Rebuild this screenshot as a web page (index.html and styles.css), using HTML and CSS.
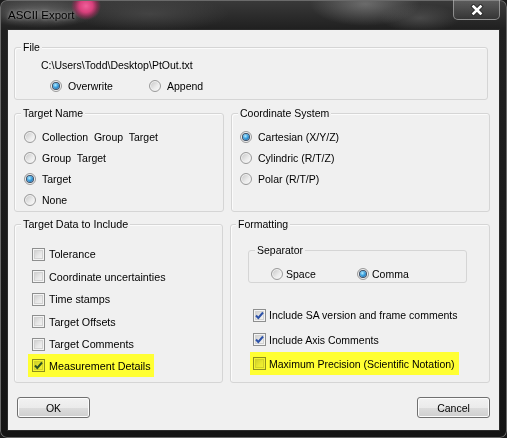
FILE: index.html
```html
<!DOCTYPE html>
<html lang="en">
<head>
    <meta charset="UTF-8">
    <title>ASCII Export</title>
    <link rel="stylesheet" href="styles.css">
</head>
<body>
    <div class="window">
        <div class="titlebar">
            <span class="title">ASCII Export</span>
            <button class="close" title="Close">
                <svg width="14" height="12" viewBox="0 0 14 12">
                    <path d="M3.5 2.5 L10.5 9.5 M10.5 2.5 L3.5 9.5" stroke="#2a2a2a" stroke-width="4.4" stroke-linecap="square"/>
                    <path d="M3.5 2.5 L10.5 9.5 M10.5 2.5 L3.5 9.5" stroke="#fff" stroke-width="2.6" stroke-linecap="square"/>
                </svg>
            </button>
        </div>

        <div class="client">
            <div class="group file">
                <span class="caption">File</span>
                <div class="path">C:\Users\Todd\Desktop\PtOut.txt</div>
                <div class="options">
                    <label class="opt"><span class="radio checked"></span>Overwrite</label>
                    <label class="opt"><span class="radio"></span>Append</label>
                </div>
            </div>

            <div class="row row-mid">
                <div class="group target-name">
                    <span class="caption">Target Name</span>
                    <div class="stack">
                        <label class="opt"><span class="radio"></span>Collection&nbsp; Group&nbsp; Target</label>
                        <label class="opt"><span class="radio"></span>Group&nbsp; Target</label>
                        <label class="opt"><span class="radio checked"></span>Target</label>
                        <label class="opt"><span class="radio"></span>None</label>
                    </div>
                </div>
                <div class="group coords">
                    <span class="caption">Coordinate System</span>
                    <div class="stack">
                        <label class="opt"><span class="radio checked"></span>Cartesian (X/Y/Z)</label>
                        <label class="opt"><span class="radio"></span>Cylindric (R/T/Z)</label>
                        <label class="opt"><span class="radio"></span>Polar (R/T/P)</label>
                    </div>
                </div>
            </div>

            <div class="row row-low">
                <div class="group target-data">
                    <span class="caption">Target Data to Include</span>
                    <div class="stack">
                        <label class="opt"><span class="check"></span>Tolerance</label>
                        <label class="opt"><span class="check"></span>Coordinate uncertainties</label>
                        <label class="opt"><span class="check"></span>Time stamps</label>
                        <label class="opt"><span class="check"></span>Target Offsets</label>
                        <label class="opt"><span class="check"></span>Target Comments</label>
                        <label class="opt hl">
                            <span class="check">
                                <svg width="11" height="11" viewBox="0 0 11 11"><path d="M2 5.5 L4.3 8 L9 2.5" fill="none" stroke="#2d52a8" stroke-width="2"/></svg>
                            </span>Measurement Details
                        </label>
                    </div>
                </div>
                <div class="group formatting">
                    <span class="caption">Formatting</span>
                    <div class="group separator">
                        <span class="caption">Separator</span>
                        <div class="options">
                            <label class="opt"><span class="radio"></span>Space</label>
                            <label class="opt"><span class="radio checked"></span>Comma</label>
                        </div>
                    </div>
                    <div class="stack">
                        <label class="opt">
                            <span class="check">
                                <svg width="11" height="11" viewBox="0 0 11 11"><path d="M2 5.5 L4.3 8 L9 2.5" fill="none" stroke="#2d52a8" stroke-width="2"/></svg>
                            </span>Include SA version and frame comments
                        </label>
                        <label class="opt">
                            <span class="check">
                                <svg width="11" height="11" viewBox="0 0 11 11"><path d="M2 5.5 L4.3 8 L9 2.5" fill="none" stroke="#2d52a8" stroke-width="2"/></svg>
                            </span>Include Axis Comments
                        </label>
                        <label class="opt hl"><span class="check"></span>Maximum Precision (Scientific Notation)</label>
                    </div>
                </div>
            </div>

            <div class="buttons">
                <button class="btn">OK</button>
                <button class="btn">Cancel</button>
            </div>
        </div>
    </div>
</body>
</html>
```

FILE: styles.css
```css
* {
    margin: 0;
    padding: 0;
    box-sizing: border-box;
}

body {
    font-family: 'Liberation Sans', Arial, sans-serif;
    font-size: 10.5px;
    color: #000;
    background-color: #1a1a1a;
}

.window {
    width: 507px;
    height: 438px;
    display: flex;
    flex-direction: column;
    border-radius: 7px;
    box-shadow: inset 0 0 0 1px #6a6a6a;
    background:
        radial-gradient(ellipse 15px 14px at 86px 6px, #f0609a 0, #d8407c 45%, rgba(190, 40, 100, 0.5) 75%, transparent 100%),
        radial-gradient(ellipse 55px 22px at 365px 4px, rgba(150, 150, 150, 0.55), transparent),
        radial-gradient(ellipse 40px 14px at 420px 18px, rgba(110, 110, 110, 0.45), transparent),
        radial-gradient(ellipse 80px 18px at 150px 14px, rgba(85, 85, 85, 0.55), transparent),
        radial-gradient(ellipse 60px 16px at 40px 12px, rgba(130, 130, 130, 0.6), transparent),
        linear-gradient(#3a3a3a, #202020 29px, #141414);
}

.titlebar {
    height: 29px;
    display: flex;
    justify-content: space-between;
    align-items: flex-start;
    padding: 0 7px 0 8px;
}

.title {
    margin-top: 8px;
    font-size: 11.5px;
    line-height: 14px;
    color: #000;
    text-shadow: 0 0 7px rgba(255, 255, 255, 0.6), 0 0 3px rgba(255, 255, 255, 0.45);
}

.close {
    width: 47px;
    height: 20px;
    border: 1px solid rgba(190, 190, 190, 0.6);
    border-top: none;
    border-radius: 0 0 5px 5px;
    background: linear-gradient(rgba(255, 255, 255, 0.18), rgba(255, 255, 255, 0.06));
    display: flex;
    align-items: center;
    justify-content: center;
}

.client {
    height: 402px;
    margin: 0 7px;
    border: 1px solid #2b2b2b;
    background-color: #f0f0f0;
    padding: 17px 9px 0 6px;
}

.group {
    border: 1px solid #d5d5d5;
    border-radius: 3px;
    box-shadow: inset 1px 1px 0 #fbfbfb;
}

.caption {
    display: block;
    width: fit-content;
    margin: -7px 0 0 6px;
    padding: 0 2px;
    line-height: 13px;
    background-color: #f0f0f0;
}

.opt {
    display: flex;
    align-items: center;
    gap: 6px;
    line-height: 14px;
    white-space: nowrap;
}

.options {
    display: flex;
    height: 14px;
}

.stack {
    display: flex;
    flex-direction: column;
}

/* radio buttons */
.radio {
    position: relative;
    flex: none;
    width: 12px;
    height: 12px;
    border-radius: 50%;
    border: 1px solid #9a9a9a;
    background: linear-gradient(135deg, #c4c4c4, #ececec 60%, #fafafa);
    box-shadow: inset 0 0 0 1px #f2f2f2;
}

.radio.checked::after {
    content: '';
    position: absolute;
    left: 2px;
    top: 2px;
    width: 6px;
    height: 6px;
    border-radius: 50%;
    background: radial-gradient(circle at 40% 35%, #b8ecff 0, #3ea3e0 45%, #0c4f94 100%);
    box-shadow: 0 0 0 1px #3c4f66;
}

/* check boxes */
.check {
    flex: none;
    width: 13px;
    height: 13px;
    border: 1px solid #8e8f8f;
    background: linear-gradient(135deg, #c6c6c6, #e8e8e8 55%, #f6f6f6);
    box-shadow: inset 0 0 0 1px #f4f4f4, inset 0 0 0 2px #d2d2d2;
}

.check svg {
    display: block;
}

.hl {
    align-self: flex-start;
    background-color: #ffff33;
}

.hl .check {
    mix-blend-mode: multiply;
}

/* file box */
.file {
    width: 474px;
    height: 53px;
}

.path {
    margin: 5px 0 0 26px;
    line-height: 13px;
}

.file .options {
    margin: 7px 0 0 35px;
}

.file .opt:first-child {
    width: 99px;
}

/* rows of boxes */
.row {
    display: flex;
    gap: 7px;
}

.row-mid {
    margin-top: 13px;
}

.row-mid > .group {
    height: 99px;
}

.target-name {
    width: 210px;
}

.coords {
    width: 259px;
}

.row-mid .stack {
    padding-top: 6px;
}

.row-mid .opt {
    height: 21px;
}

.target-name .stack {
    padding-left: 9px;
}

.coords .stack {
    padding-left: 8px;
}

.row-low {
    margin-top: 12px;
    font-size: 10.75px;
}

.row-low > .group {
    height: 159px;
}

.target-data {
    width: 209px;
}

.target-data .stack {
    padding: 12px 0 0 17px;
}

.target-data .opt {
    height: 22.5px;
    gap: 4px;
}

.target-data .hl {
    height: 23px;
    margin: -1.5px 0 0 -4px;
    padding: 0 3px 0 4px;
}

.formatting {
    width: 260px;
    font-size: 10.5px;
}

.formatting .caption {
    margin-left: 5px;
}

.separator {
    width: 219px;
    height: 33px;
    margin: 19px 0 0 17px;
    box-shadow: none;
}

.separator .caption {
    margin-left: 6px;
}

.separator .options {
    margin: 5px 0 0 22px;
}

.separator .opt:first-child {
    width: 86px;
}

.formatting .stack {
    padding: 20px 0 0 22px;
}

.formatting .opt {
    height: 24.5px;
    gap: 3px;
}

.formatting .hl {
    height: 23px;
    margin-left: -3px;
    padding: 0 4px 0 3px;
}

/* buttons */
.buttons {
    display: flex;
    justify-content: space-between;
    margin: 14px 0 0 3px;
}

.btn {
    width: 73px;
    height: 21px;
    font-family: inherit;
    font-size: 10.5px;
    color: #000;
    border: 1px solid #707070;
    border-radius: 3px;
    background: linear-gradient(#f2f2f2, #ebebeb 50%, #dddddd 50%, #cfcfcf);
    box-shadow: inset 0 0 0 1px #fcfcfc;
}
```
